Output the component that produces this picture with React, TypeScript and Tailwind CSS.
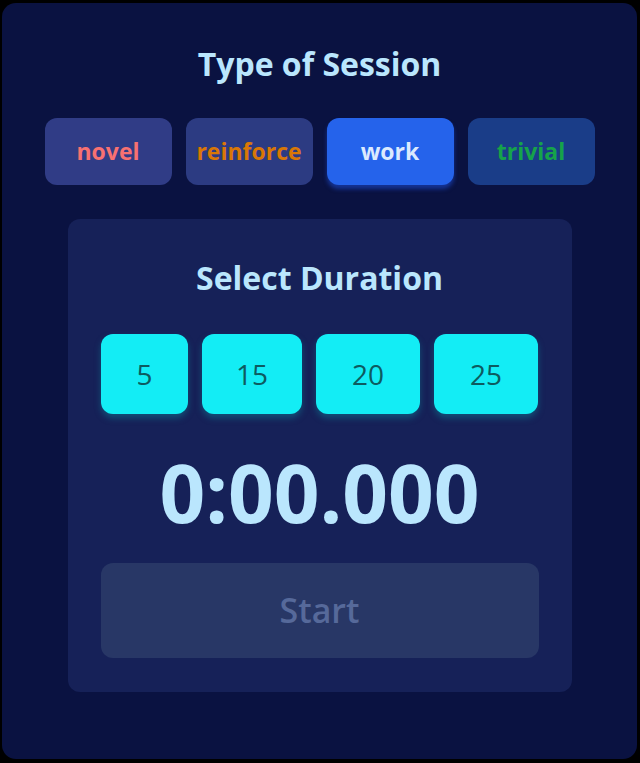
import { useState } from "react";

// ─── Data ─────────────────────────────────────────────────

type SessionKind = "novel" | "reinforce" | "work" | "trivial";

const SESSION_TYPES: { id: SessionKind; label: string; idle: string; text: string }[] = [
  { id: "novel", label: "novel", idle: "bg-[#303c86]", text: "text-[#f87171]" },
  { id: "reinforce", label: "reinforce", idle: "bg-[#2c3b82]", text: "text-[#d97706]" },
  { id: "work", label: "work", idle: "bg-[#1f3a85]", text: "text-[#dbeafe]" },
  { id: "trivial", label: "trivial", idle: "bg-[#1a3d88]", text: "text-[#16a34a]" },
];

const DURATIONS = [
  { minutes: 5, width: "w-[87px]" },
  { minutes: 15, width: "w-[100px]" },
  { minutes: 20, width: "w-[104px]" },
  { minutes: 25, width: "w-[104px]" },
];

function formatElapsed(ms: number): string {
  const minutes = Math.floor(ms / 60000);
  const seconds = Math.floor((ms % 60000) / 1000);
  const millis = ms % 1000;
  return `${minutes}:${String(seconds).padStart(2, "0")}.${String(millis).padStart(3, "0")}`;
}

// ─── Component ────────────────────────────────────────────

export default function App() {
  const [session, setSession] = useState<SessionKind>("work");
  const [duration, setDuration] = useState<number | null>(null);

  return (
    <div className="min-h-screen bg-black pt-[3px] pl-[2px] font-['Open_Sans',sans-serif]">
      <div className="flex w-[635px] flex-col items-center rounded-[14px] bg-[#0a1241] pt-[41px] pb-[67px]">
        <h2 className="text-[32px] leading-10 font-bold text-[#bae6fd]">Type of Session</h2>

        {/* Session type picker */}
        <div className="mt-[34px] flex gap-[14px]">
          {SESSION_TYPES.map((t) => {
            const active = t.id === session;
            return (
              <button
                key={t.id}
                onClick={() => setSession(t.id)}
                className={
                  active
                    ? `flex h-[67px] w-[127px] items-center justify-center rounded-xl bg-[#2563eb] text-[23px] font-bold shadow-[0_4px_4px_rgba(29,78,216,0.55)] ${t.text}`
                    : `flex h-[67px] w-[127px] items-center justify-center rounded-xl text-[23px] font-bold ${t.idle} ${t.text}`
                }
              >
                {t.label}
              </button>
            );
          })}
        </div>

        {/* Timer panel */}
        <div className="mt-[34px] flex w-[504px] flex-col items-center rounded-xl bg-[#162158] px-[33px] pt-[39px] pb-[34px]">
          <h2 className="text-[32px] leading-10 font-bold text-[#bae6fd]">Select Duration</h2>

          <div className="mt-[36px] flex gap-[14px]">
            {DURATIONS.map((d) => (
              <button
                key={d.minutes}
                onClick={() => setDuration(d.minutes)}
                className={`flex h-[80px] ${d.width} items-center justify-center rounded-xl bg-[#13edf5] text-[28px] font-medium text-[#0d5b60] shadow-[0_4px_6px_rgba(14,116,144,0.55)]`}
              >
                {d.minutes}
              </button>
            ))}
          </div>

          <div className="mt-[38px] text-[80px] leading-[80px] font-bold text-[#bae6fd]">
            {formatElapsed(0)}
          </div>

          <button
            disabled={duration === null}
            className="mt-[31px] flex h-[95px] w-full items-center justify-center rounded-xl bg-[#283766] text-[34px] font-semibold text-[#56699a]"
          >
            Start
          </button>
        </div>
      </div>
    </div>
  );
}
